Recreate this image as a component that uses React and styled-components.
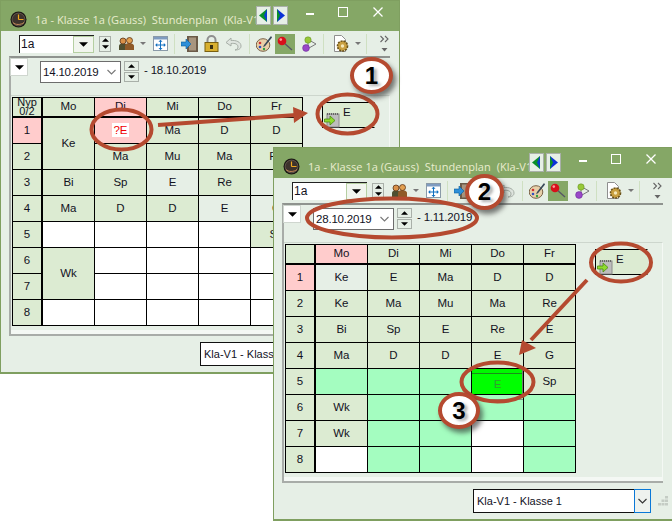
import React from "react";
import styled, { createGlobalStyle } from "styled-components";

const GlobalStyle = createGlobalStyle`
  html, body {
    margin: 0;
    padding: 0;
    background: #fff;
  }
  body {
    font-family: "Liberation Sans", Arial, sans-serif;
    font-size: 11px;
    color: #12121e;
  }
`;

const TONES = {
  green: "#dcebd2",
  pink: "#ffcccc",
  pale: "#e6efe6",
  white: "#fff",
  mint: "#a4fdc0",
  lime: "linear-gradient(#00f800 4px, #1a8c1a 4px, #1a8c1a 5px, #00ff00 5px)",
  ghost: "linear-gradient(#a4fdc0 4px, #7d9c88 4px, #7d9c88 5px, #a4fdc0 5px)",
};

const RUST = "#b54a30";

const Canvas = styled.div`
  position: relative;
  width: 672px;
  height: 522px;
  overflow: hidden;
  background: #fff;
`;

const WindowFrame = styled.div`
  position: absolute;
  left: ${(p) => p.$x}px;
  top: ${(p) => p.$y}px;
  width: 400px;
  height: 374px;
  box-sizing: border-box;
  border: 1px solid #7f9f60;
  border-bottom-width: 2px;
  background: #e6efe6;
  display: flex;
  flex-direction: column;
`;

const TitleBar = styled.div`
  height: 30px;
  flex: none;
  background: #85a766;
  display: flex;
  align-items: center;
  padding-left: 9px;
`;

const TitleText = styled.div`
  width: 221px;
  margin-left: 8px;
  margin-top: 7px;
  overflow: hidden;
  white-space: pre;
  font-family: "Open Sans", sans-serif;
  font-size: 11px;
  letter-spacing: 0.05px;
  color: #e9edcf;
`;

const NavButton = styled.div`
  width: 13px;
  height: 17px;
  margin-left: ${(p) => p.$ml}px;
  margin-top: -2px;
  border: 1px solid #a9b0a9;
  background: #e6efe6;
  display: flex;
  align-items: center;
  justify-content: center;
`;

const WinControl = styled.div`
  width: 12px;
  height: 12px;
  margin-left: ${(p) => p.$ml}px;
  margin-top: -8px;
  display: flex;
  align-items: center;
  justify-content: center;
`;

const Toolbar = styled.div`
  height: 25px;
  flex: none;
  display: flex;
  align-items: center;
  padding-left: 18px;
`;

const Slot = styled.div`
  width: ${(p) => p.$w}px;
  margin-left: ${(p) => p.$ml || 0}px;
  height: ${(p) => p.$h || 20}px;
  flex: none;
  display: flex;
  align-items: center;
  justify-content: center;
  background: ${(p) => (p.$active ? "#85a766" : "transparent")};
`;

const Sep = styled.div`
  width: 1px;
  height: 20px;
  flex: none;
  margin-left: ${(p) => p.$ml}px;
  background: #cfe0c2;
`;

const Combo = styled.div`
  width: 75px;
  height: 18px;
  flex: none;
  box-sizing: border-box;
  display: flex;
  background: #fff;
  border-left: 1px solid #222;
  border-top: 1px solid #222;
`;

const ComboValue = styled.div`
  flex: 1;
  padding-left: 1px;
  font-size: 12px;
  line-height: 16px;
`;

const ComboButton = styled.div`
  width: 21px;
  box-sizing: border-box;
  border: 1px solid #b5cfa2;
  background: #f1f5ee;
  display: flex;
  align-items: center;
  justify-content: center;
`;

const ToolSpinner = styled.div`
  width: 12px;
  height: 16px;
  margin-left: 5px;
  flex: none;
  box-sizing: border-box;
  border: 1px solid #a9b0a9;
  background: #e6efe6;
  display: flex;
  flex-direction: column;
  align-items: center;
  justify-content: space-around;
`;

const Panel = styled.div`
  width: 381px;
  height: 280px;
  flex: none;
  margin-left: 8px;
  box-sizing: border-box;
  border-top: 2px solid #8f938f;
  border-left: 2px solid #a8aca8;
  border-bottom: 2px solid #a8aca8;
  display: flex;
  flex-direction: column;
`;

const DateRow = styled.div`
  height: 37px;
  flex: none;
  display: flex;
  align-items: flex-start;
`;

const DropButton = styled.div`
  width: 18px;
  height: 18px;
  box-sizing: border-box;
  margin-left: -1px;
  border: 1px solid #cfd6cf;
  background: #fff;
  display: flex;
  align-items: center;
  justify-content: center;
`;

const DateBox = styled.div`
  width: 81px;
  height: 22px;
  margin-left: 12px;
  margin-top: 3px;
  box-sizing: border-box;
  border: 1px solid #6d6d6d;
  background: #fff;
  display: flex;
  align-items: center;
  justify-content: space-between;
  padding: 0 4px 0 2px;
  font-size: 11.5px;
  letter-spacing: -0.2px;
`;

const DateSpinner = styled.div`
  width: 15px;
  margin-left: 3px;
  margin-top: 3px;
  display: flex;
  flex-direction: column;
  gap: 1px;
`;

const SpinButton = styled.div`
  height: 10px;
  box-sizing: border-box;
  border: 1px solid #a9b0a9;
  background: #e6efe6;
  display: flex;
  align-items: center;
  justify-content: center;
`;

const DateEnd = styled.div`
  margin-left: 5px;
  margin-top: 6px;
  font-size: 11.5px;
  letter-spacing: -0.2px;
`;

const GridArea = styled.div`
  flex: 1;
  display: flex;
  align-items: flex-start;
  padding: 1px 0 0 1px;
  border-top: 1px solid #cdd6cd;
  border-right: 1px solid #f4f8f4;
  box-shadow: inset 0 -4px 0 #f4f8f4;
`;

const Grid = styled.div`
  display: grid;
  grid-template-columns: 29px repeat(5, 51px);
  grid-template-rows: 19px repeat(8, 25px);
  gap: 1px;
  padding: 1px;
  background: #000;
`;

const Cell = styled.div`
  grid-row: ${(p) => (p.$span ? `span ${p.$span}` : "auto")};
  background: ${(p) => TONES[p.$tone || "green"]};
  margin-right: ${(p) => (p.$side ? 1 : 0)}px;
  margin-bottom: ${(p) => (p.$head ? 1 : 0)}px;
  padding-top: ${(p) => (p.$tone === "lime" ? 6 : 0)}px;
  padding-bottom: ${(p) => (p.$head ? 2 : 1)}px;
  box-sizing: border-box;
  display: flex;
  align-items: center;
  justify-content: center;
  font-size: 11.5px;
  color: ${(p) => (p.$tone === "lime" ? "#2f9f2f" : "#12121e")};
  box-shadow: ${(p) => (p.$tone === "lime" ? "inset -1px 0 #6f7f6f" : "none")};
`;

const CornerLabel = styled.div`
  text-align: center;
  font-size: 11px;
  line-height: 9px;
  margin-bottom: -2px;
`;

const ClashLabel = styled.span`
  background: #fff;
  color: #f00000;
  padding: 0 1px;
  line-height: 14px;
`;

const DockCell = styled.div`
  width: 53px;
  height: 26px;
  margin: 5px 0 0 19px;
  box-sizing: border-box;
  border: 1px solid #000;
  border-right-color: #dcebd2;
  background: #dcebd2;
  display: flex;
  align-items: flex-start;
  padding: 3px 0 0 1px;
  font-size: 11.5px;
`;

const DockLetter = styled.span`
  margin-left: 3px;
`;

const Footer = styled.div`
  flex: 1;
  display: flex;
  align-items: flex-start;
  padding: 6px 0 0 199px;
`;

const FooterCombo = styled.div`
  width: 178px;
  height: 24px;
  box-sizing: border-box;
  border: 1px solid #111;
  background: #fff;
  display: flex;
  font-size: 11px;
`;

const FooterValue = styled.div`
  flex: 1;
  padding-left: 3px;
  line-height: 22px;
`;

const FooterButton = styled.div`
  width: 17px;
  margin: -1px -1px -1px 0;
  box-sizing: border-box;
  border: 1px solid #0a78d7;
  background: #eef2ee;
  display: flex;
  align-items: center;
  justify-content: center;
`;

const Grip = styled.div`
  margin: 7px 0 0 7px;
`;

const Overlay = styled.svg`
  position: absolute;
  left: 0;
  top: 0;
  pointer-events: none;
`;

const Badge = styled.div`
  position: absolute;
  left: ${(p) => p.$x}px;
  top: ${(p) => p.$y}px;
  width: ${(p) => p.$w}px;
  height: ${(p) => p.$h}px;
  box-sizing: border-box;
  border: 4px solid ${RUST};
  border-radius: 50%;
  background: #fff;
  box-shadow: 3px 4px 5px rgba(40, 40, 40, 0.6);
  display: flex;
  align-items: center;
  justify-content: center;
  font-family: "Liberation Sans", Arial, sans-serif;
  font-weight: 700;
  font-size: 24px;
  color: #000;
  text-shadow: 3px 2px 3px rgba(70, 70, 70, 0.45);
`;

const Tri = ({ down = true, size = 9, color = "#000" }) => (
  <svg width={size} height={Math.ceil(size / 2)} viewBox="0 0 10 5" style={{ display: "block" }}>
    <path d={down ? "M0 0h10L5 5z" : "M0 5h10L5 0z"} fill={color} />
  </svg>
);

const Chevron = ({ color = "#777" }) => (
  <svg width="9" height="6" viewBox="0 0 9 6">
    <path d="M.5 1l4 4 4-4" fill="none" stroke={color} strokeWidth="1.1" />
  </svg>
);

const ClockIcon = () => (
  <svg width="17" height="17" viewBox="0 0 17 17" style={{ flex: "none", marginTop: 7 }}>
    <circle cx="8.5" cy="8.5" r="8" fill="#1c1815" />
    <circle cx="8.5" cy="8.5" r="6.4" fill="#3d332c" stroke="#75675a" strokeWidth=".7" />
    <path d="M8.5 8.5V3.5M8.5 8.5h5" stroke="#f0a820" strokeWidth="1.2" />
    <path d="M3 11.5c2 2.6 8 2.6 11 0" stroke="#c98a5a" fill="none" />
  </svg>
);

const NavArrow = ({ left }) => (
  <svg width="9" height="13" viewBox="0 0 9 13">
    {left ? (
      <>
        <path d="M8 0v13L0 6.5z" fill="#0a8f2a" />
        <path d="M8 0v13L5 6.5z" fill="#0b3fd0" />
      </>
    ) : (
      <>
        <path d="M1 0v13l8-6.5z" fill="#0a30d8" />
        <path d="M1 0v13l3-6.5z" fill="#0a8f2a" />
      </>
    )}
  </svg>
);

const PeopleIcon = () => (
  <svg width="15" height="13" viewBox="0 0 15 13">
    <path d="M0 13V9c0-2 2-2.500 4-2.500S8 7 8 9v4z" fill="#4f4f30" />
    <path d="M6 13V9c0-2 2-3 4-3s5 1 5 3v4z" fill="#8f5a28" />
    <circle cx="4" cy="4" r="3" fill="#d89048" stroke="#5a3418" strokeWidth=".8" />
    <circle cx="10.500" cy="3.500" r="3" fill="#e2a050" stroke="#5a3418" strokeWidth=".8" />
  </svg>
);

const LayoutIcon = () => (
  <svg width="15" height="15" viewBox="0 0 15 15">
    <rect x=".5" y=".5" width="14" height="14" fill="#fff" stroke="#8a9aa8" />
    <rect x="1" y="1" width="13" height="2.500" fill="#7f9cc0" />
    <path d="M7.500 4.500v9M3 9h9" stroke="#1070c0" strokeWidth="1" />
    <path d="M7.500 3.800l-2 2h4zM7.500 14l-2-2h4zM2.200 9l2-2v4zM12.800 9l-2-2v4z" fill="#1070c0" />
  </svg>
);

const DoorIcon = () => (
  <svg width="17" height="16" viewBox="0 0 17 16">
    <rect x="6" y="0" width="11" height="16" fill="#6b5a48" />
    <rect x="8" y="1.500" width="7" height="13" fill="#a8957f" />
    <path d="M0 6h5V3l5 5-5 5v-3H0z" fill="#2d8fd8" stroke="#0a5a9a" strokeWidth=".6" />
  </svg>
);

const LockIcon = () => (
  <svg width="15" height="17" viewBox="0 0 15 17">
    <path d="M3.500 8V5a4 4 0 018 0v3" fill="none" stroke="#8f8f8f" strokeWidth="2" />
    <rect x="1" y="7.500" width="13" height="9" fill="#d8b030" stroke="#7a6010" />
    <rect x="6" y="10" width="3" height="4" fill="#3a3010" />
  </svg>
);

const UndoIcon = () => (
  <svg width="17" height="14" viewBox="0 0 17 14">
    <path d="M6 1L1 5.500 6 9V6.500c4-.5 7 .5 7 3.500 0 1.500-1 2.500-3 3 4 0 6-1.500 6-4 0-4-5-6-10-5.500z" fill="#dfe5df" stroke="#a6aea6" />
  </svg>
);

const PaletteIcon = () => (
  <svg width="16" height="16" viewBox="0 0 16 16">
    <ellipse cx="7" cy="9" rx="6.800" ry="6.300" fill="#e8cfa8" stroke="#7a6248" />
    <circle cx="4" cy="7" r="1.300" fill="#d03030" />
    <circle cx="4" cy="11" r="1.300" fill="#3050c0" />
    <circle cx="8" cy="13" r="1.200" fill="#30a040" />
    <path d="M15 0L8 9l-1 2 2-.8 7-8.700z" fill="#384858" />
  </svg>
);

const PinIcon = () => (
  <svg width="16" height="16" viewBox="0 0 16 16">
    <path d="M6 6l9 8" stroke="#556" strokeWidth="1.300" />
    <circle cx="5" cy="5" r="4.300" fill="#d80f1a" />
    <circle cx="3.800" cy="3.600" r="1.300" fill="#ff9a9a" />
  </svg>
);

const MoleculeIcon = () => (
  <svg width="16" height="16" viewBox="0 0 16 16">
    <path d="M7 4L7 12M8 4l7 4-7 4" stroke="#777" fill="none" />
    <circle cx="7" cy="4" r="3.200" fill="#98c838" stroke="#5f8a20" strokeWidth=".5" />
    <circle cx="5" cy="12" r="3.400" fill="#9a48c8" stroke="#602090" strokeWidth=".5" />
  </svg>
);

const GearDocIcon = () => (
  <svg width="18" height="18" viewBox="0 0 18 18">
    <path d="M2.500.5h7l4 4v12h-11z" fill="#fff" stroke="#8f8f8f" />
    <circle cx="10.500" cy="11" r="5" fill="#c9a040" stroke="#6a5218" strokeDasharray="2 1" strokeWidth="1.600" />
    <circle cx="10.500" cy="11" r="1.700" fill="#f5e8b8" />
  </svg>
);

const OverflowIcon = () => (
  <svg width="10" height="18" viewBox="0 0 10 18">
    <path d="M.5 1l3 3-3 3M5 1l3 3-3 3" fill="none" stroke="#666" strokeWidth="1.100" />
    <path d="M1.500 13h6l-3 3.500z" fill="#666" />
  </svg>
);

const DockIcon = () => (
  <svg width="16" height="15" viewBox="0 0 16 15" style={{ flex: "none", marginTop: 7 }}>
    <rect x="3" y="1" width="12" height="13" fill="#bdbdbd" stroke="#8a8a8a" />
    <path d="M3 1h12" stroke="#666" strokeDasharray="1 1" strokeWidth="2" />
    <path d="M.5 6H6V3l5 4.500L6 12V9H.5z" fill="#8fdc30" stroke="#4a8a10" strokeWidth=".8" />
  </svg>
);

const GripIcon = () => (
  <svg width="10" height="10" viewBox="0 0 10 10" fill="#c4ccc4">
    <rect x="7" y="0" width="3" height="2.500" />
    <rect x="3.500" y="3.500" width="3" height="2.500" />
    <rect x="7" y="3.500" width="3" height="2.500" />
    <rect x="0" y="7" width="3" height="2.500" />
    <rect x="3.500" y="7" width="3" height="2.500" />
    <rect x="7" y="7" width="3" height="2.500" />
  </svg>
);

const DAYS = ["Mo", "Di", "Mi", "Do", "Fr"];

const SOURCE_ROWS = [
  [{ t: "Ke", span: 2 }, { clash: "?E", tone: "pink" }, { t: "Ma" }, { t: "D" }, { t: "D" }],
  [{ t: "Ma" }, { t: "Mu" }, { t: "Ma" }, { t: "Re" }],
  [{ t: "Bi" }, { t: "Sp" }, { t: "E", tone: "pale" }, { t: "Re" }, { t: "E", tone: "pale" }],
  [{ t: "Ma" }, { t: "D" }, { t: "D" }, { t: "E", tone: "pale" }, { t: "G", tone: "pale" }],
  [{ tone: "white" }, { tone: "white" }, { tone: "white" }, { tone: "white" }, { t: "Sp" }],
  [{ t: "Wk", span: 2 }, { tone: "white" }, { tone: "white" }, { tone: "white" }, { tone: "white" }],
  [{ tone: "white" }, { tone: "white" }, { tone: "white" }, { tone: "white" }],
  [{ tone: "white" }, { tone: "white" }, { tone: "white" }, { tone: "white" }, { tone: "white" }],
];

const mint = { tone: "mint" };
const blank = { tone: "white" };

const TARGET_ROWS = [
  [{ t: "Ke", tone: "pale" }, { t: "E" }, { t: "Ma" }, { t: "D" }, { t: "D" }],
  [{ t: "Ke" }, { t: "Ma" }, { t: "Mu" }, { t: "Ma" }, { t: "Re" }],
  [{ t: "Bi" }, { t: "Sp" }, { t: "E" }, { t: "Re" }, { t: "E" }],
  [{ t: "Ma" }, { t: "D" }, { t: "D" }, { t: "E" }, { t: "G" }],
  [mint, mint, mint, { t: "E", tone: "lime" }, { t: "Sp" }],
  [{ t: "Wk" }, mint, mint, { tone: "ghost" }, mint],
  [{ t: "Wk" }, mint, mint, blank, mint],
  [blank, mint, mint, blank, mint],
];

const Timetable = ({ rows, corner, pinkDay, pinkPeriod = 1 }) => (
  <Grid>
    <Cell $side $head>{corner}</Cell>
    {DAYS.map((d) => (
      <Cell key={d} $head $tone={d === pinkDay ? "pink" : "green"}>{d}</Cell>
    ))}
    {rows.map((row, r) => (
      <React.Fragment key={r}>
        <Cell $side $tone={r + 1 === pinkPeriod ? "pink" : "green"}>{r + 1}</Cell>
        {row.map((c, i) => (
          <Cell key={i} $tone={c.tone} $span={c.span}>
            {c.clash ? <ClashLabel>{c.clash}</ClashLabel> : c.t}
          </Cell>
        ))}
      </React.Fragment>
    ))}
  </Grid>
);

const PlanWindow = ({ x, y, from, to, corner, rows, pinkDay }) => (
  <WindowFrame $x={x} $y={y}>
    <TitleBar>
      <ClockIcon />
      <TitleText>{"1a - Klasse 1a (Gauss)  Stundenplan  (Kla-V1)"}</TitleText>
      <NavButton $ml={0}><NavArrow left /></NavButton>
      <NavButton $ml={2}><NavArrow /></NavButton>
      <WinControl $ml={16}>
        <svg width="8" height="2" style={{ marginTop: 3 }}><rect width="8" height="2" fill="#fff" /></svg>
      </WinControl>
      <WinControl $ml={21}>
        <svg width="10" height="10"><rect x=".5" y=".5" width="9" height="9" fill="none" stroke="#fff" /></svg>
      </WinControl>
      <WinControl $ml={23}>
        <svg width="10" height="10"><path d="M.5.5l9 9M9.500.5l-9 9" stroke="#fff" strokeWidth="1.300" /></svg>
      </WinControl>
    </TitleBar>
    <Toolbar>
      <Combo>
        <ComboValue>1a</ComboValue>
        <ComboButton><Tri /></ComboButton>
      </Combo>
      <ToolSpinner><Tri down={false} size={7} /><Tri size={7} /></ToolSpinner>
      <Slot $w={15} $ml={8}><PeopleIcon /></Slot>
      <Slot $w={6} $ml={6}><Tri size={6} color="#777" /></Slot>
      <Slot $w={15} $ml={7}><LayoutIcon /></Slot>
      <Sep $ml={6} />
      <Slot $w={17} $ml={6}><DoorIcon /></Slot>
      <Slot $w={15} $ml={6}><LockIcon /></Slot>
      <Slot $w={17} $ml={6}><UndoIcon /></Slot>
      <Sep $ml={7} />
      <Slot $w={16} $ml={6}><PaletteIcon /></Slot>
      <Slot $w={20} $ml={3} $active><PinIcon /></Slot>
      <Slot $w={16} $ml={6}><MoleculeIcon /></Slot>
      <Sep $ml={6} />
      <Slot $w={18} $ml={8}><GearDocIcon /></Slot>
      <Slot $w={6} $ml={5}><Tri size={6} color="#777" /></Slot>
      <Sep $ml={5} />
      <Slot $w={10} $ml={13}><OverflowIcon /></Slot>
    </Toolbar>
    <Panel>
      <DateRow>
        <DropButton><Tri /></DropButton>
        <DateBox>{from}<Chevron /></DateBox>
        <DateSpinner>
          <SpinButton><Tri down={false} size={7} /></SpinButton>
          <SpinButton><Tri size={7} /></SpinButton>
        </DateSpinner>
        <DateEnd>- {to}</DateEnd>
      </DateRow>
      <GridArea>
        <Timetable rows={rows} corner={corner} pinkDay={pinkDay} />
        <DockCell><DockIcon /><DockLetter>E</DockLetter></DockCell>
      </GridArea>
    </Panel>
    <Footer>
      <FooterCombo>
        <FooterValue>Kla-V1 - Klasse 1</FooterValue>
        <FooterButton><Chevron color="#333" /></FooterButton>
      </FooterCombo>
      <Grip><GripIcon /></Grip>
    </Footer>
  </WindowFrame>
);

const Annotations = () => (
  <Overlay width="672" height="522" viewBox="0 0 672 522">
    <g fill="none" stroke={RUST} strokeWidth="4">
      <ellipse cx="121.500" cy="129.500" rx="30" ry="20" />
      <ellipse cx="347.500" cy="114" rx="30" ry="19.500" />
      <ellipse cx="392" cy="218" rx="85" ry="19.500" />
      <ellipse cx="621" cy="262.500" rx="30" ry="19" />
      <ellipse cx="497.500" cy="382" rx="36" ry="19.500" />
      <path d="M158 125l138-10" />
      <path d="M587 280l-56 60" />
    </g>
    <path d="M293 107l15 6-14 10zM522 340l14 8-17 7z" fill={RUST} />
  </Overlay>
);

const App = () => (
  <Canvas>
    <GlobalStyle />
    <PlanWindow
      x={0}
      y={0}
      from="14.10.2019"
      to="18.10.2019"
      corner={<CornerLabel>Nyp<br />0/2</CornerLabel>}
      rows={SOURCE_ROWS}
      pinkDay="Di"
    />
    <PlanWindow
      x={273}
      y={147}
      from="28.10.2019"
      to="1.11.2019"
      corner={null}
      rows={TARGET_ROWS}
      pinkDay="Mo"
    />
    <Annotations />
    <Badge $x={350} $y={57} $w={43} $h={37}>1</Badge>
    <Badge $x={465} $y={174} $w={39} $h={36}>2</Badge>
    <Badge $x={438} $y={392} $w={42} $h={37}>3</Badge>
  </Canvas>
);

export default App;
